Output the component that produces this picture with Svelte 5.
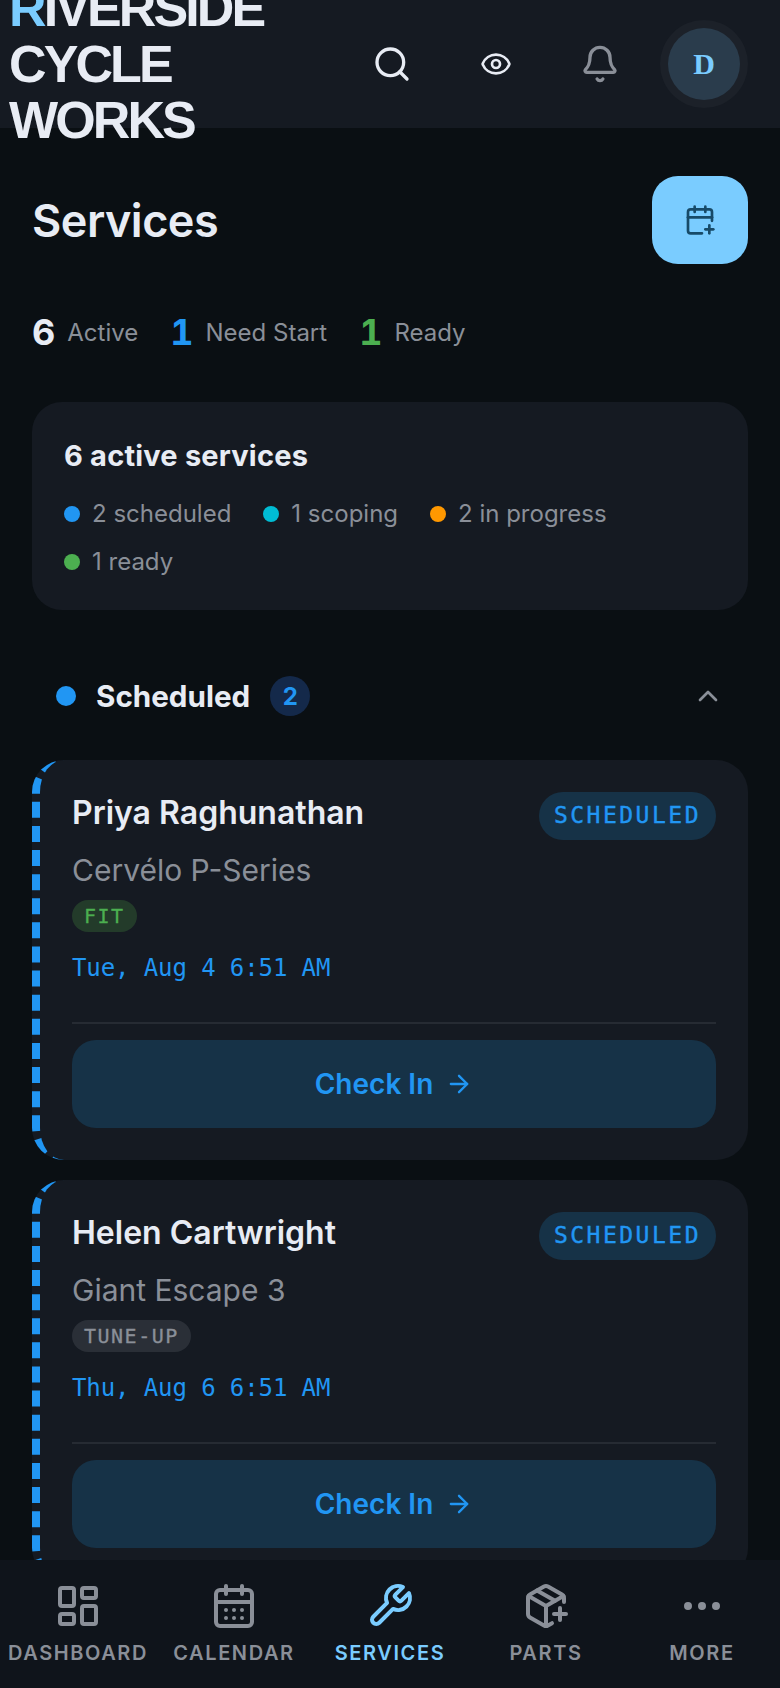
<script>
  const cards = [
    { name: 'Priya Raghunathan', bike: 'Cervélo P-Series', tag: 'FIT', tagClass: 'green', date: 'Tue, Aug 4 6:51 AM' },
    { name: 'Helen Cartwright', bike: 'Giant Escape 3', tag: 'TUNE-UP', tagClass: 'gray', date: 'Thu, Aug 6 6:51 AM' }
  ];
  const legend = [
    { label: '2 scheduled', color: '#2196f3' },
    { label: '1 scoping', color: '#00bcd4' },
    { label: '2 in progress', color: '#ff9800' },
    { label: '1 ready', color: '#4caf50' }
  ];
</script>

<div class="app">
  <header class="top">
    <div class="logo">RIVERSIDE CYCLE WORKS</div>
    <div class="actions">
      <div class="iconbtn light">
        <svg viewBox="0 0 24 24"><path d="m21 21-4.34-4.34"/><circle cx="11" cy="11" r="8"/></svg>
      </div>
      <div class="iconbtn light eye">
        <svg viewBox="0 0 24 24"><path d="M2.062 12.348a1 1 0 0 1 0-.696 10.75 10.75 0 0 1 19.876 0 1 1 0 0 1 0 .696 10.75 10.75 0 0 1-19.876 0"/><circle cx="12" cy="12" r="3"/></svg>
      </div>
      <div class="iconbtn muted">
        <svg viewBox="0 0 24 24"><path d="M10.268 21a2 2 0 0 0 3.464 0"/><path d="M3.262 15.326A1 1 0 0 0 4 17h16a1 1 0 0 0 .74-1.673C19.41 13.956 18 12.499 18 8A6 6 0 0 0 6 8c0 4.499-1.411 5.956-2.738 7.326"/></svg>
      </div>
      <div class="avatar"><span>D</span></div>
    </div>
  </header>

  <main class="content">
    <div class="titlerow">
      <h1>Services</h1>
      <div class="addbtn">
        <svg viewBox="0 0 24 24"><path d="M16 19h6"/><path d="M16 2v4"/><path d="M19 16v6"/><path d="M21 12.598V6a2 2 0 0 0-2-2H5a2 2 0 0 0-2 2v14a2 2 0 0 0 2 2h8.5"/><path d="M3 10h18"/><path d="M8 2v4"/></svg>
      </div>
    </div>

    <div class="stats">
      <div class="stat"><b>6</b><span>Active</span></div>
      <div class="stat"><b class="blue">1</b><span>Need Start</span></div>
      <div class="stat"><b class="green">1</b><span>Ready</span></div>
    </div>

    <section class="summary">
      <h2>6 active services</h2>
      <div class="legend">
        {#each legend as l}
          <div class="legitem"><i style="background:{l.color}"></i>{l.label}</div>
        {/each}
      </div>
    </section>

    <div class="sechead">
      <i class="secdot"></i>
      <span class="sectitle">Scheduled</span>
      <span class="count">2</span>
      <svg class="chev" viewBox="0 0 24 24"><path d="m18 15-6-6-6 6"/></svg>
    </div>

    <div class="cards">
      {#each cards as c}
        <article class="card">
          <div class="cardtop">
            <div class="name">{c.name}</div>
            <div class="badge">SCHEDULED</div>
          </div>
          <div class="bike">{c.bike}</div>
          <div class="tag {c.tagClass}">{c.tag}</div>
          <div class="date">{c.date}</div>
          <div class="divider"></div>
          <div class="cta">
            <span>Check In</span>
            <svg viewBox="0 0 24 24"><path d="M5 12h14"/><path d="m12 5 7 7-7 7"/></svg>
          </div>
        </article>
      {/each}
    </div>
  </main>

  <nav class="bottom">
    <div class="navitem">
      <svg viewBox="0 0 24 24"><rect x="3" y="3" width="7" height="9" rx="1"/><rect x="14" y="3" width="7" height="5" rx="1"/><rect x="14" y="12" width="7" height="9" rx="1"/><rect x="3" y="16" width="7" height="5" rx="1"/></svg>
      <span>DASHBOARD</span>
    </div>
    <div class="navitem">
      <svg viewBox="0 0 24 24"><path d="M8 2v4"/><path d="M16 2v4"/><rect x="3" y="4" width="18" height="18" rx="2"/><path d="M3 10h18"/><path d="M8 14h.01"/><path d="M12 14h.01"/><path d="M16 14h.01"/><path d="M8 18h.01"/><path d="M12 18h.01"/><path d="M16 18h.01"/></svg>
      <span>CALENDAR</span>
    </div>
    <div class="navitem active">
      <svg viewBox="0 0 24 24"><path d="M14.7 6.3a1 1 0 0 0 0 1.4l1.6 1.6a1 1 0 0 0 1.4 0l3.77-3.77a6 6 0 0 1-7.94 7.94l-6.91 6.91a2.12 2.12 0 0 1-3-3l6.91-6.91a6 6 0 0 1 7.94-7.94l-3.76 3.76z"/></svg>
      <span>SERVICES</span>
    </div>
    <div class="navitem">
      <svg viewBox="0 0 24 24"><path d="M16 16h6"/><path d="M19 13v6"/><path d="M21 10V8a2 2 0 0 0-1-1.73l-7-4a2 2 0 0 0-2 0l-7 4A2 2 0 0 0 3 8v8a2 2 0 0 0 1 1.73l7 4a2 2 0 0 0 2 0l2-1.14"/><path d="m7.5 4.27 9 5.15"/><polyline points="3.29 7 12 12 20.71 7"/><line x1="12" x2="12" y1="22" y2="12"/></svg>
      <span>PARTS</span>
    </div>
    <div class="navitem">
      <svg viewBox="0 0 24 24"><circle cx="12" cy="12" r="1"/><circle cx="19" cy="12" r="1"/><circle cx="5" cy="12" r="1"/></svg>
      <span>MORE</span>
    </div>
  </nav>
</div>

<style>
  :global(body) {
    margin: 0;
    background: #0a0f13;
  }
  .app {
    width: 780px;
    height: 1688px;
    display: flex;
    flex-direction: column;
    overflow: hidden;
    background: #0a0f13;
    color: #e8ecf4;
    font-family: Inter, "Liberation Sans", sans-serif;
  }
  svg {
    fill: none;
    stroke: currentColor;
    stroke-linecap: round;
    stroke-linejoin: round;
    stroke-width: 2;
    display: block;
    flex: none;
  }

  .top {
    flex: none;
    height: 128px;
    box-sizing: border-box;
    padding: 0 32px 0 9px;
    background: #151a22;
    display: flex;
    align-items: center;
    justify-content: space-between;
    position: relative;
    z-index: 2;
  }
  .logo {
    width: 300px;
    font-family: "Liberation Sans", sans-serif;
    font-weight: 700;
    font-size: 52px;
    line-height: 56px;
    letter-spacing: -2.9px;
    color: #e8ecf4;
  }
  .logo::first-letter {
    color: #7accff;
  }
  .actions {
    display: flex;
    align-items: center;
    gap: 16px;
  }
  .iconbtn {
    width: 88px;
    height: 88px;
    display: flex;
    align-items: center;
    justify-content: center;
  }
  .iconbtn svg {
    width: 40px;
    height: 40px;
  }
  .iconbtn.eye svg {
    width: 32px;
    height: 32px;
  }
  .light {
    color: #e8ecf4;
  }
  .muted {
    color: #8a8f98;
  }
  .avatar {
    width: 72px;
    height: 72px;
    margin: 8px;
    border-radius: 50%;
    background: #2a3c4c;
    box-shadow: 0 0 0 8px #1c2129;
    display: flex;
    align-items: center;
    justify-content: center;
    color: #7accff;
    font-family: "Liberation Serif", serif;
    font-weight: 700;
    font-size: 30px;
  }

  .content {
    flex: 1;
    min-height: 0;
    overflow: hidden;
    padding: 48px 32px 0;
  }
  .titlerow {
    display: flex;
    align-items: center;
    justify-content: space-between;
    height: 88px;
  }
  h1 {
    margin: 0;
    font-size: 45px;
    font-weight: 600;
    letter-spacing: -0.5px;
    color: #e8ecf4;
  }
  .addbtn {
    width: 96px;
    height: 88px;
    border-radius: 26px;
    background: #7accff;
    color: #174a68;
    display: flex;
    align-items: center;
    justify-content: center;
  }
  .addbtn svg {
    width: 32px;
    height: 32px;
  }

  .stats {
    display: flex;
    gap: 32px;
    height: 40px;
    margin-top: 48px;
    align-items: center;
  }
  .stat {
    display: flex;
    align-items: center;
    gap: 12px;
  }
  .stat b {
    font-size: 36px;
    font-weight: 700;
    color: #e8ecf4;
    font-variant-numeric: tabular-nums;
    font-feature-settings: "tnum";
    min-width: 23px;
    text-align: center;
  }
  .stat b.blue {
    color: #2196f3;
  }
  .stat b.green {
    color: #4caf50;
  }
  .stat span {
    font-size: 24px;
    color: #8a8f98;
  }

  .summary {
    margin-top: 50px;
    height: 208px;
    box-sizing: border-box;
    padding: 32px;
    border-radius: 30px;
    background: #151a22;
  }
  h2 {
    margin: 0;
    font-size: 29px;
    line-height: 44px;
    font-weight: 700;
    letter-spacing: 0.2px;
    color: #e8ecf4;
  }
  .legend {
    margin-top: 20px;
    display: flex;
    flex-wrap: wrap;
    gap: 16px 32px;
  }
  .legitem {
    display: flex;
    align-items: center;
    gap: 12px;
    font-size: 24px;
    line-height: 32px;
    color: #8a8f98;
  }
  .legitem i {
    width: 16px;
    height: 16px;
    border-radius: 50%;
  }

  .sechead {
    margin-top: 58px;
    height: 56px;
    padding: 0 24px;
    display: flex;
    align-items: center;
  }
  .secdot {
    width: 20px;
    height: 20px;
    border-radius: 50%;
    background: #2196f3;
    margin-right: 20px;
  }
  .sectitle {
    font-size: 29.6px;
    font-weight: 700;
    color: #e8ecf4;
  }
  .count {
    width: 40px;
    height: 40px;
    margin-left: 20px;
    border-radius: 50%;
    background: #14294a;
    color: #2196f3;
    font-size: 24px;
    font-weight: 700;
    display: flex;
    align-items: center;
    justify-content: center;
  }
  .chev {
    width: 32px;
    height: 32px;
    margin-left: auto;
    margin-right: 0;
    color: #8a8f98;
  }

  .cards {
    margin-top: 36px;
    display: flex;
    flex-direction: column;
    gap: 20px;
  }
  .card {
    height: 400px;
    box-sizing: border-box;
    padding: 32px 32px 32px 32px;
    border-left: 8px dashed #2196f3;
    border-radius: 32px;
    background: #151a22;
    flex: none;
  }
  .cardtop {
    display: flex;
    justify-content: space-between;
    align-items: flex-start;
    height: 48px;
  }
  .name {
    font-size: 32px;
    line-height: 42px;
    font-weight: 600;
    color: #e8ecf4;
  }
  .badge {
    height: 48px;
    box-sizing: border-box;
    padding: 0 15px;
    border-radius: 24px;
    background: #163247;
    color: #2196f3;
    font-family: "DejaVu Sans Mono", monospace;
    font-size: 23px;
    line-height: 47px;
    letter-spacing: 2.5px;
    -webkit-text-stroke: 0.4px currentColor;
  }
  .bike {
    margin-top: 8px;
    font-size: 30px;
    line-height: 44px;
    color: #8a8f98;
  }
  .tag {
    margin-top: 8px;
    height: 32px;
    width: fit-content;
    box-sizing: border-box;
    padding: 0 12px;
    border-radius: 16px;
    font-family: "DejaVu Sans Mono", monospace;
    font-size: 20px;
    line-height: 33px;
    letter-spacing: 1.5px;
    -webkit-text-stroke: 0.3px currentColor;
  }
  .tag.green {
    background: #233b2a;
    color: #4caf50;
  }
  .tag.gray {
    background: #2a2f37;
    color: #8a8f98;
  }
  .date {
    margin-top: 16px;
    font-family: "DejaVu Sans Mono", monospace;
    font-size: 24px;
    line-height: 40px;
    letter-spacing: -0.1px;
    color: #2196f3;
  }
  .divider {
    margin-top: 34px;
    height: 2px;
    background: #262b33;
  }
  .cta {
    margin-top: 16px;
    height: 88px;
    border-radius: 24px;
    background: #163247;
    color: #2196f3;
    display: flex;
    align-items: center;
    justify-content: center;
    gap: 12px;
    font-size: 28px;
    font-weight: 600;
  }
  .cta svg {
    width: 28px;
    height: 28px;
  }

  .bottom {
    flex: none;
    height: 128px;
    background: #0f141b;
    display: grid;
    grid-template-columns: repeat(5, 1fr);
    position: relative;
    z-index: 2;
  }
  .navitem {
    display: flex;
    flex-direction: column;
    align-items: center;
    padding-top: 22px;
    color: #8a8f98;
    white-space: nowrap;
  }
  .navitem svg {
    width: 48px;
    height: 48px;
  }
  .navitem span {
    margin-top: 9px;
    font-size: 20px;
    line-height: 28px;
    font-weight: 600;
    letter-spacing: 1.6px;
  }
  .navitem.active {
    color: #7accff;
  }
</style>
